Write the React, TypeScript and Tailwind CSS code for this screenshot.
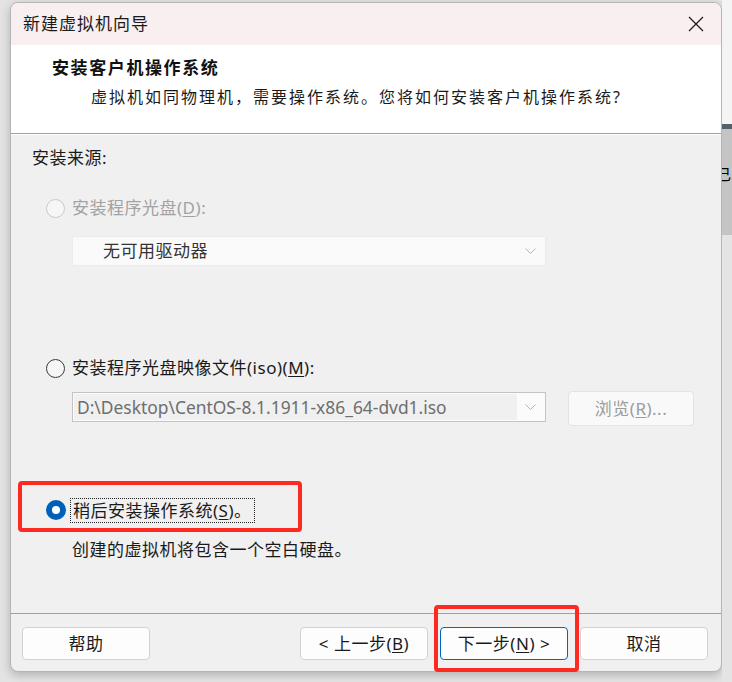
import React from 'react';

const font = "font-['Noto_Sans','Noto_Sans_CJK_SC',sans-serif]";

function Radio({ state }: { state: 'disabled' | 'off' | 'on' }) {
  if (state === 'on') {
    return (
      <div className="w-[20px] h-[20px] rounded-full bg-[#005fb8] flex items-center justify-center shrink-0">
        <div className="w-[8px] h-[8px] rounded-full bg-white" />
      </div>
    );
  }
  return (
    <div
      className={
        state === 'disabled'
          ? 'w-[19px] h-[19px] rounded-full border border-[#c9c9c9] bg-[#f6f6f6] shrink-0'
          : 'w-[19px] h-[19px] rounded-full border border-[#3a3a3a] bg-[#f6f6f6] shrink-0'
      }
    />
  );
}

function Chevron({ color }: { color: string }) {
  return (
    <svg width="11" height="6" viewBox="0 0 11 6" fill="none">
      <path d="M0.5 0.5 L5.5 5.5 L10.5 0.5" stroke={color} strokeWidth="1" />
    </svg>
  );
}

function Btn({ children, primary }: { children: React.ReactNode; primary?: boolean }) {
  return (
    <button
      className={
        primary
          ? 'w-[128px] h-[33px] rounded-[4px] border border-[#0067c0] bg-[#fdfdfd] text-[17px] text-[#1b1b1b] flex items-center justify-center'
          : 'w-[128px] h-[33px] rounded-[4px] border border-[#d2d2d2] bg-[#fdfdfd] text-[17px] text-[#1b1b1b] flex items-center justify-center'
      }
    >
      {children}
    </button>
  );
}

export default function App() {
  return (
    <div className={`relative w-[732px] h-[682px] overflow-hidden bg-[#e3e3e3] flex ${font}`}>
      {/* left gutter */}
      <div className="w-[10px] shrink-0" />

      {/* dialog */}
      <div className="mt-[2px] w-[712px] h-[670px] shrink-0 rounded-[8px] border border-[#b5b5b5] bg-[#f0f0f0] overflow-hidden flex flex-col shadow-[0_3px_10px_rgba(0,0,0,0.22)]">
        {/* title bar */}
        <div className="h-[42px] bg-[#f9eff0] flex items-center justify-between pl-[12px] pr-[17px]">
          <span className="text-[17px] tracking-[1px] text-[#1a1a1a]">新建虚拟机向导</span>
          <svg width="16" height="16" viewBox="0 0 16 16" fill="none">
            <path d="M1 1 L15 15 M15 1 L1 15" stroke="#1a1a1a" strokeWidth="1.2" />
          </svg>
        </div>

        {/* header */}
        <div className="h-[88px] bg-white flex flex-col pt-[11px]">
          <div className="pl-[41px] h-[24px] leading-[24px] text-[17px] font-bold tracking-[1.6px] text-[#111]">
            安装客户机操作系统
          </div>
          <div className="pl-[80px] mt-[5px] h-[24px] leading-[24px] text-[16px] tracking-[2px] text-[#1a1a1a]">
            虚拟机如同物理机，需要操作系统。您将如何安装客户机操作系统?
          </div>
        </div>
        <div className="h-px bg-[#a0a0a0]" />
        <div className="h-px bg-white" />

        {/* body */}
        <div className="h-[478px] flex flex-col text-[17px] tracking-[0.5px]">
          <div className="mt-[11px] pl-[21px] h-[24px] leading-[24px] text-[#1a1a1a]">安装来源:</div>

          <div className="mt-[26px] pl-[35px] h-[24px] flex items-center gap-[7px]">
            <Radio state="disabled" />
            <span className="text-[#a2a2a2]">
              安装程序光盘(<span className="underline underline-offset-2">D</span>):
            </span>
          </div>

          <div className="mt-[16px] ml-[61px] w-[474px] h-[30px] bg-[#fafafa] border border-[#ebebeb] flex items-center justify-between pl-[30px] pr-[9px]">
            <span className="text-[#333]">无可用驱动器</span>
            <Chevron color="#b4b4b4" />
          </div>

          <div className="mt-[90px] pl-[35px] h-[24px] flex items-center gap-[7px]">
            <Radio state="off" />
            <span className="text-[#1a1a1a]">
              安装程序光盘映像文件(iso)(<span className="underline underline-offset-2">M</span>):
            </span>
          </div>

          <div className="mt-[11px] ml-[61px] flex items-start gap-[22px]">
            <div className="mt-[1px] w-[474px] h-[30px] bg-[#fbfbfb] border border-[#c3c3c3] flex items-center p-[1px]">
              <div className="w-[443px] h-[26px] bg-[#f0f0f0] flex items-center pl-[3px] text-[17.4px] tracking-normal text-[#6e6e6e] whitespace-nowrap overflow-hidden">
                D:\Desktop\CentOS-8.1.1911-x86_64-dvd1.iso
              </div>
              <div className="flex-1 flex items-center justify-center">
                <Chevron color="#b4b4b4" />
              </div>
            </div>
            <div className="w-[126px] h-[35px] rounded-[4px] bg-[#f9f9f9] border border-[#e3e3e3] flex items-center justify-center text-[#9c9c9c]">
              浏览(<span className="underline underline-offset-2">R</span>)...
            </div>
          </div>

          <div className="mt-[72px] pl-[35px] h-[24px] flex items-center gap-[4px]">
            <Radio state="on" />
            <span className="h-[25px] px-[2px] leading-[23px] border border-dotted border-[#222] text-[#1a1a1a]">
              稍后安装操作系统(<span className="underline underline-offset-2">S</span>)。
            </span>
          </div>

          <div className="mt-[16px] pl-[61px] h-[24px] leading-[24px] text-[#1a1a1a]">
            创建的虚拟机将包含一个空白硬盘。
          </div>
        </div>

        <div className="h-px bg-[#a0a0a0]" />

        {/* footer */}
        <div className="flex-1 flex items-start justify-between pt-[13px] pl-[11px] pr-[13px] tracking-[0.5px]">
          <Btn>帮助</Btn>
          <div className="flex gap-[12px]">
            <Btn>
              &lt; 上一步(<span className="underline underline-offset-2">B</span>)
            </Btn>
            <Btn primary>
              下一步(<span className="underline underline-offset-2">N</span>) &gt;
            </Btn>
            <Btn>取消</Btn>
          </div>
        </div>
      </div>

      {/* right strip: window behind */}
      <div className="w-[10px] shrink-0 flex flex-col">
        <div className="h-[124px] bg-[#f4f4f4]" />
        <div className="h-[5px] bg-[#56606a]" />
        <div className="h-[106px] bg-[#c4c4c4] text-[15px] leading-[90px] text-black overflow-hidden whitespace-nowrap">
          <span className="-ml-[6px]">己</span>
        </div>
        <div className="flex-1 bg-[#e4e4e4]" />
      </div>

      {/* red highlight boxes */}
      <div className="absolute left-[18px] top-[481px] w-[284px] h-[51px] border-[4px] border-[#fe2a22] rounded-[4px]" />
      <div className="absolute left-[434px] top-[605px] w-[145px] h-[67px] border-[4px] border-[#fe2a22] rounded-[4px]" />
    </div>
  );
}
